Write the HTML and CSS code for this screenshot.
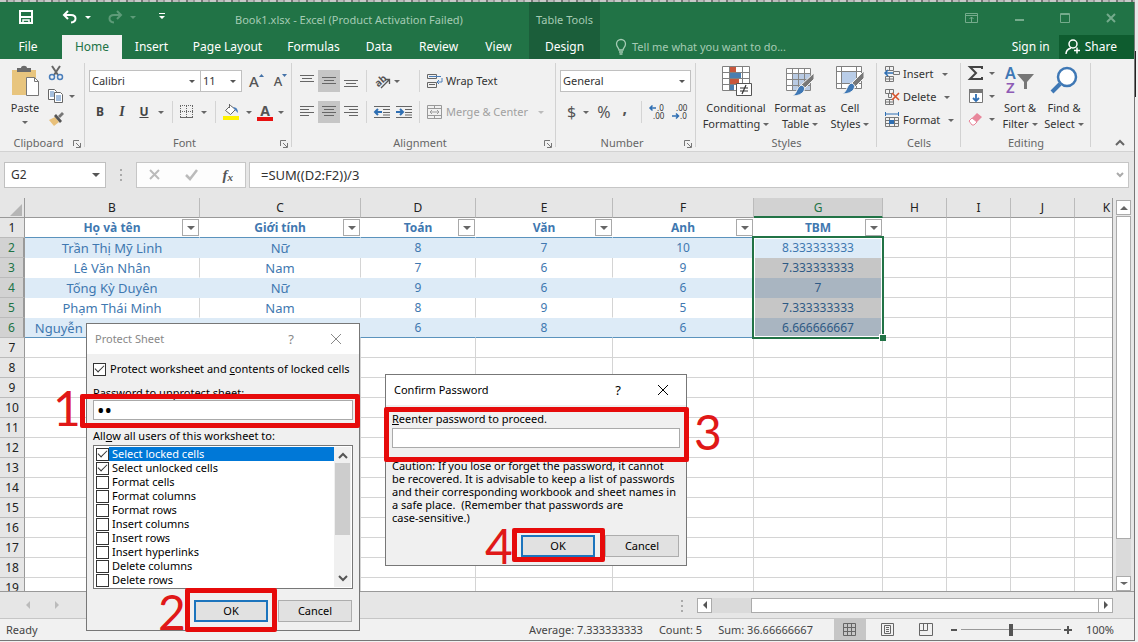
FILE: index.html
```html
<!DOCTYPE html>
<html lang="en">
<head>
<meta charset="utf-8">
<title>Book1.xlsx - Excel</title>
<link rel="stylesheet" href="styles.css">
</head>
<body>
<div class="app">
<header class="titlebar">
  <div class="quick">
    <button class="ib" aria-label="Save"><svg width="16" height="16" viewBox="0 0 16 16" fill="none" stroke="#fff" stroke-width="2"><path d="M2 2h12v12H2zM2 8h12"/><path d="M5 14v-3h6v3" stroke-width="1.5"/></svg></button>
    <button class="ib undo" aria-label="Undo"><svg width="16" height="14" viewBox="0 0 16 14" fill="none" stroke="#fff" stroke-width="2"><path d="M6 1L2 5l4 4M2 5h7c6 0 6 7 0 7.500"/></svg><i class="caret"></i></button>
    <button class="ib redo" aria-label="Redo"><svg width="16" height="14" viewBox="0 0 16 14" fill="none" stroke="#5d9b78" stroke-width="2"><path d="M10 1l4 4-4 4M14 5H7c-6 0-6 7 0 7.500"/></svg><i class="caret"></i></button>
    <button class="ib more" aria-label="Customize"><svg width="8" height="8" viewBox="0 0 8 8"><path d="M1 0h6v1H1zM1 3h6L4 6z" fill="#fff"/></svg></button>
  </div>
  <div class="doc">Book1.xlsx - Excel (Product Activation Failed)</div>
  <div class="tools">Table Tools</div>
  <div class="winbtns">
    <button class="ib" aria-label="Ribbon options"><svg width="14" height="12" viewBox="0 0 14 12" fill="none" stroke="#75ab8c"><path d="M.5 1.500h12v9H.5zM.5 3.500h12M6.500 10V5M4.500 7l2-2 2 2"/></svg></button>
    <button class="ib" aria-label="Minimize"><svg width="12" height="12"><path d="M2 7h9v2H2z" fill="#75ab8c"/></svg></button>
    <button class="ib" aria-label="Maximize"><svg width="12" height="12" fill="none" stroke="#75ab8c"><path d="M1.500 1.500h9v9h-9zM1 2.500h10"/></svg></button>
    <button class="ib" aria-label="Close"><svg width="12" height="12" stroke="#75ab8c" stroke-width="2"><path d="M2 2l8 8M10 2l-8 8"/></svg></button>
  </div>
</header>
<nav class="tabs">
  <button class="file">File</button>
  <button class="on">Home</button>
  <button class="t-ins">Insert</button>
  <button class="t-page">Page Layout</button>
  <button class="t-form">Formulas</button>
  <button class="t-data">Data</button>
  <button class="t-rev">Review</button>
  <button class="t-view">View</button>
  <button class="design">Design</button>
  <button class="tell"><svg width="12" height="16" viewBox="0 0 12 16" fill="none" stroke="#a5cbb4" stroke-width="1.300"><path d="M4 11C4 9 1.500 8 1.500 5a4.300 4.300 0 0 1 9 0c0 3-2.500 4-2.500 6zM4 13h4M4.500 15h3"/></svg>Tell me what you want to do...</button>
  <button class="sign">Sign in</button>
  <button class="share"><svg width="16" height="16" viewBox="0 0 16 16" fill="none" stroke="#fff" stroke-width="1.500"><circle cx="8" cy="5" r="4"/><path d="M1 15c0-3 2-5 5-6M9 11.500h6M12 8.500v6"/></svg>Share</button>
</nav>

<section class="ribbon">
  <div class="group g-clip">
    <div class="body">
      <button class="big paste"><svg width="30" height="32" viewBox="0 0 30 32"><path d="M2 5h24v25H2z" fill="#e8c57e"/><path d="M7 3h4c0-3 6-3 6 0h4v4H7z" fill="#6b6b6b"/><path d="M16.500 12.500h8l4 4v14h-12z" fill="#fff" stroke="#777"/><path d="M24.500 12.500v4h4" fill="none" stroke="#777"/></svg><span>Paste</span><i class="caret"></i></button>
      <div class="stack">
        <button class="ib" aria-label="Cut"><svg width="16" height="16" viewBox="0 0 16 16" fill="none"><path d="M4 1l6 9M12 1L6 10" stroke="#666" stroke-width="2"/><circle cx="4" cy="12" r="2.500" stroke="#4a7ebb" stroke-width="1.500"/><circle cx="12" cy="12" r="2.500" stroke="#4a7ebb" stroke-width="1.500"/></svg></button>
        <button class="ib" aria-label="Copy"><svg width="16" height="16" viewBox="0 0 16 16" fill="#fff" stroke="#666"><path d="M.5 1.500h6l2 2v8h-8z"/><path d="M2 4h4M2 6h4M2 8h4" stroke="#4a7ebb"/><path d="M6.500 4.500h6l2 2v8h-8z"/><path d="M8 8h5M8 10h5M8 12h5" stroke="#4a7ebb"/></svg><i class="caret"></i></button>
        <button class="ib" aria-label="Format Painter"><svg width="16" height="16" viewBox="0 0 16 16"><path d="M1 9l6-3 4 5-5 4z" fill="#e8c07a"/><path d="M6 5l2-2 6 7-2 2z" fill="#555"/><path d="M10 5l4-4 2 2-4 4z" fill="#777"/></svg></button>
      </div>
    </div>
    <div class="glabel"><span>Clipboard</span><svg class="lau" width="8" height="8" viewBox="0 0 8 8" fill="none" stroke="#777"><path d="M.5 6V.5H6M3 3l4 4M7.500 3v4.500H3"/></svg></div>
  </div>

  <div class="group g-font">
    <div class="body rows">
      <div class="row">
        <span class="sel w-face"><select aria-label="Font"><option>Calibri</option></select></span><span class="sel w-size"><select aria-label="Font size"><option>11</option></select></span>
        <button class="ib grow" aria-label="Increase font size"><span>A</span><svg width="5" height="14"><path d="M0 3h5L2.500 0z" fill="#4472a8"/></svg></button>
        <button class="ib shrink" aria-label="Decrease font size"><span>A</span><svg width="5" height="14"><path d="M0 0h5L2.500 3z" fill="#4472a8"/></svg></button>
      </div>
      <div class="row fmt">
        <button class="ib ch"><b>B</b></button><button class="ib ch it"><b>I</b></button><button class="ib ch"><u>U</u></button><i class="caret"></i><i class="sep"></i>
        <button class="ib bord" aria-label="Borders"><svg width="14" height="14" viewBox="0 0 14 14" fill="none" stroke="#666"><path d="M0 .5h13M.5 1v12M6.500 1v12M12.500 1v12M0 6.500h13" stroke-dasharray="1 1"/><path d="M0 12.500h13"/></svg><i class="caret"></i></button><i class="sep"></i>
        <button class="ib fillb" aria-label="Fill color"><svg width="16" height="16" viewBox="0 0 16 16"><path d="M2.500 6.500l5-5 5 4-5 5z" fill="#fff" stroke="#666"/><path d="M6.500 4V0" stroke="#666"/><path d="M10 3q5 0 5 6l-3-3z" fill="#4a7ebb"/><path d="M0 12h16v4H0z" fill="#fff200"/></svg><i class="caret"></i></button>
        <button class="ib" aria-label="Font color"><span class="acol">A</span><i class="caret"></i></button>
      </div>
    </div>
    <div class="glabel"><span>Font</span><svg class="lau" width="8" height="8" viewBox="0 0 8 8" fill="none" stroke="#777"><path d="M.5 6V.5H6M3 3l4 4M7.500 3v4.500H3"/></svg></div>
  </div>

  <div class="group g-align">
    <div class="body rows">
      <div class="row">
        <button class="al" aria-label="Top align"><svg width="14" height="14" stroke="#666"><path d="M0 1.500h14M2 4.500h10M0 7.500h14"/></svg></button>
        <button class="al act" aria-label="Middle align"><svg width="14" height="14" stroke="#666"><path d="M0 3.500h14M2 6.500h10M0 9.500h14"/></svg></button>
        <button class="al" aria-label="Bottom align"><svg width="14" height="14" stroke="#666"><path d="M0 6.500h14M2 9.500h10M0 12.500h14"/></svg></button><i class="sep"></i>
        <button class="ib orient" aria-label="Orientation"><svg width="18" height="18" viewBox="0 0 18 18" fill="none" stroke="#555"><text x="1" y="13" font-size="10" font-weight="700" fill="#555" stroke="none" transform="rotate(-42 6 10)">ab</text><path d="M7 16l8-8M11 7.500h4.500V12" stroke-width="1.300"/></svg><i class="caret"></i></button><i class="sep s2"></i>
        <button class="ib txt"><svg width="16" height="16" viewBox="0 0 16 16" fill="none" stroke="#666"><path d="M.5 1.500h9v4h-9zM.5 9.500h9v5h-9zM2 11.500h6"/><path d="M2 3.500h12M15 5v4h-5M12 7l-2 2 2 2" stroke="#4a7ebb"/></svg>Wrap Text</button>
      </div>
      <div class="row">
        <button class="al" aria-label="Align left"><svg width="14" height="14" stroke="#666"><path d="M0 1.500h14M0 4.500h9M0 7.500h14M0 10.500h9"/></svg></button>
        <button class="al act" aria-label="Center"><svg width="14" height="14" stroke="#666"><path d="M0 1.500h14M2 4.500h10M0 7.500h14M2 10.500h10"/></svg></button>
        <button class="al" aria-label="Align right"><svg width="14" height="14" stroke="#666"><path d="M0 1.500h14M5 4.500h9M0 7.500h14M5 10.500h9"/></svg></button><i class="sep"></i>
        <button class="ib ind" aria-label="Decrease indent"><svg width="16" height="14" viewBox="0 0 16 14" stroke="#666"><path d="M0 1.500h16M9 4.500h7M9 7.500h7M0 12.500h16M9 10h7"/><path d="M1 7h7M4 4L1 7l3 3" stroke="#2f6fb3" stroke-width="2" fill="none"/></svg></button>
        <button class="ib ind" aria-label="Increase indent"><svg width="16" height="14" viewBox="0 0 16 14" stroke="#666"><path d="M0 1.500h16M9 4.500h7M9 7.500h7M0 12.500h16M9 10h7"/><path d="M0 7h6M4 4l3 3-3 3" stroke="#2f6fb3" stroke-width="2" fill="none"/></svg></button><i class="sep s3"></i>
        <button class="ib txt dim"><svg width="16" height="16" viewBox="0 0 16 16" fill="none" stroke="#999"><path d="M.5 1.500h14v13H.5zM.5 4.500h14M.5 11.500h14M7.500 1v3M7.500 12v3M3 8h9M5 6L3 8l2 2M10 6l2 2-2 2"/></svg>Merge &amp; Center<i class="caret"></i></button>
      </div>
    </div>
    <div class="glabel"><span>Alignment</span><svg class="lau" width="8" height="8" viewBox="0 0 8 8" fill="none" stroke="#777"><path d="M.5 6V.5H6M3 3l4 4M7.500 3v4.500H3"/></svg></div>
  </div>

  <div class="group g-num">
    <div class="body rows">
      <div class="row"><span class="sel w-num"><select aria-label="Number format"><option>General</option></select></span></div>
      <div class="row nums">
        <button class="ib sym dol">$<i class="caret"></i></button><button class="ib sym pct">%</button><button class="ib sym com">,</button><i class="sep"></i>
        <button class="ib" aria-label="Increase decimal"><svg width="16" height="18" viewBox="0 0 16 18" font-size="8" fill="#333"><text x="8" y="8">.0</text><text x="4" y="16">.00</text><path d="M1 5h6M3.500 2.500L1 5l2.500 2.500" stroke="#2f6fb3" stroke-width="1.500" fill="none"/></svg></button>
        <button class="ib dec" aria-label="Decrease decimal"><svg width="16" height="18" viewBox="0 0 16 18" font-size="8" fill="#333"><text x="4" y="8">.00</text><text x="8" y="16">.0</text><path d="M0 13h6M4 10.500L6.500 13 4 15.500" stroke="#2f6fb3" stroke-width="1.500" fill="none"/></svg></button>
      </div>
    </div>
    <div class="glabel"><span>Number</span><svg class="lau" width="8" height="8" viewBox="0 0 8 8" fill="none" stroke="#777"><path d="M.5 6V.5H6M3 3l4 4M7.500 3v4.500H3"/></svg></div>
  </div>

  <div class="group g-styles">
    <div class="body">
      <button class="big w-cond"><svg width="32" height="32" viewBox="0 0 32 32"><path d="M2.500 1.500h27v24h-27z" fill="#fff"/><path d="M10 2h6v6h-6zM10 13h9v6h-9z" fill="#c8573c"/><path d="M10 8h11v5H10zM10 19h4v7h-4z" fill="#4a7eb0"/><path d="M2.500 1.500h27v24h-27zM2 7.500h27M2 13.500h27M2 19.500h27M9.500 2v24M22.500 2v24" fill="none" stroke="#808080"/><path d="M16.500 18.500h15v12h-15z" fill="#fff" stroke="#555"/><path d="M20 23h8M20 26h8M26 20l-4 9" stroke="#333" stroke-width="1.200"/></svg><span>Conditional</span><span>Formatting<i class="caret"></i></span></button>
      <button class="big w-fmt"><svg width="32" height="32" viewBox="0 0 32 32"><path d="M2.500 3.500h24v22h-24z" fill="#fff"/><path d="M8 9h18v16H8z" fill="#b9cbe4"/><path d="M2.500 3.500h24v22h-24zM2 8.500h24M2 14.500h24M2 20.500h24M8.500 4v22M14.500 4v22M20.500 4v22" fill="none" stroke="#858585"/><path d="M30 8v6L20 24l-3-4z" fill="#777" stroke="#f1f1f1"/><path d="M17 20q5 1 3 6-3 5-12 5 4-2 5-6 1-3 4-5z" fill="#3f78b5" stroke="#f1f1f1"/></svg><span>Format as</span><span>Table<i class="caret"></i></span></button>
      <button class="big w-cell"><svg width="32" height="32" viewBox="0 0 32 32"><path d="M2.500 1.500h25v22h-25z" fill="#fff"/><path d="M7 7h15v11H7z" fill="#b9cde8"/><path d="M2.500 1.500h25v22h-25zM2 6.500h25M2 18.500h25M7.500 2v21M22.500 2v21" fill="none" stroke="#808080"/><path d="M30 6v7L20 23l-3-4z" fill="#777" stroke="#f1f1f1"/><path d="M17 18q5 1 3 6-3 5-12 5 4-2 5-6 1-3 4-5z" fill="#3f78b5" stroke="#f1f1f1"/></svg><span>Cell</span><span>Styles<i class="caret"></i></span></button>
    </div>
    <div class="glabel"><span>Styles</span></div>
  </div>

  <div class="group g-cells">
    <div class="body stack3">
      <button class="ib txt"><svg width="16" height="16" viewBox="0 0 16 16" fill="none" stroke="#777"><path d="M1.500.5h8v4h-8zM5.500.5v4M1.500 10.500h8v5h-8zM5.500 10v5M1 13h8M9.500 5.500h6v3h-6z"/><path d="M1 7h8M4 4L1 7l3 3" stroke="#2f6fb3" stroke-width="1.500"/></svg>Insert<i class="caret"></i></button>
      <button class="ib txt"><svg width="16" height="16" viewBox="0 0 16 16" fill="none" stroke="#777"><path d="M1.500.5h8v4h-8zM5.500.5v4M1.500 10.500h8v5h-8zM5.500 10v5M1 13h8M4.500 4.500h3v4h-3z"/><path d="M8 4l7 7M15 4l-7 7" stroke="#d8532b" stroke-width="1.600"/></svg>Delete<i class="caret"></i></button>
      <button class="ib txt"><svg width="16" height="16" viewBox="0 0 16 16" fill="none" stroke="#777"><path d="M1.500 5.500h13v9h-13zM1 8.500h14M1 11.500h14M5.500 5v10M10.500 5v10"/><path d="M5 8h5v4H5z" fill="#2f6fb3" stroke="none"/><path d="M1 2h13M1.500 0v4M14.500 0v4" stroke="#2f6fb3"/></svg>Format<i class="caret"></i></button>
    </div>
    <div class="glabel"><span>Cells</span></div>
  </div>

  <div class="group g-edit">
    <div class="body">
      <div class="stack ed">
        <button class="ib" aria-label="AutoSum"><svg width="16" height="16" viewBox="0 0 16 16" fill="none" stroke="#444" stroke-width="2"><path d="M14 4V2H2l6 6-6 6h12v-2"/></svg><i class="caret"></i></button>
        <button class="ib" aria-label="Fill"><svg width="16" height="16" viewBox="0 0 16 16"><path d="M1.500 1.500h13v13h-13z" fill="#fff" stroke="#777"/><path d="M1 1h14v4H1z" fill="#777"/><path d="M8 6v7M5 10l3 3 3-3" stroke="#2f6fb3" stroke-width="1.800" fill="none"/></svg><i class="caret"></i></button>
        <button class="ib" aria-label="Clear"><svg width="16" height="16" viewBox="0 0 16 16"><path d="M1 10l8-8 5 4-8 8z" fill="#e8879b"/><path d="M1 10l3-3 5 4-3 3H4z" fill="#fff" stroke="#e8879b"/></svg><i class="caret"></i></button>
      </div>
      <button class="big w-sort"><svg width="32" height="32" viewBox="0 0 32 32"><text x="1" y="14" font-size="16" font-weight="600" fill="#3f78b5">A</text><text x="2" y="28" font-size="15" font-weight="600" fill="#8e5bb5">Z</text><path d="M13 9h17l-7 8v7h-3v-7z" fill="#777"/></svg><span>Sort &amp;</span><span>Filter<i class="caret"></i></span></button>
      <button class="big w-find"><svg width="32" height="32" viewBox="0 0 32 32"><circle cx="19" cy="12" r="9" fill="#fff" stroke="#3f78b5" stroke-width="2.500"/><path d="M12 19l-8 8" stroke="#3f78b5" stroke-width="4"/></svg><span>Find &amp;</span><span>Select<i class="caret"></i></span></button>
    </div>
    <div class="glabel"><span>Editing</span></div>
  </div>
  <button class="ib collapse" aria-label="Collapse ribbon"><svg width="10" height="8" fill="none" stroke="#666" stroke-width="2"><path d="M1 6l4-4 4 4"/></svg></button>
</section>

<section class="fbar">
  <span class="sel namebox"><select aria-label="Name box"><option>G2</option></select></span>
  <i class="dots"></i>
  <div class="fx">
    <button class="ib" aria-label="Cancel"><svg width="12" height="12" stroke="#bbb" stroke-width="2"><path d="M1 1l9 9M10 1l-9 9"/></svg></button>
    <button class="ib" aria-label="Enter"><svg width="14" height="12" stroke="#bbb" stroke-width="2.500" fill="none"><path d="M1 6l4 4 7-9"/></svg></button>
    <button class="ib fxt"><i>f</i><small>x</small></button>
  </div>
  <div class="formula"><input aria-label="Formula" value="=SUM((D2:F2))/3"><svg width="8" height="8" fill="none" stroke="#aaa" stroke-width="2"><path d="M1 2l3 3 3-3"/></svg></div>
</section>

<main class="work">
  <div class="gridwrap">
  <table class="grid">
    <colgroup><col class="c0"><col class="cb"><col class="cc"><col class="cd"><col class="ce"><col class="cf"><col class="cg"><col class="cs"><col class="cs"><col class="cs"><col class="cs"></colgroup>
    <tr class="cols"><th><svg width="12" height="12"><path d="M12 0v12H0z" fill="#b5b5b5"/></svg></th><th>B</th><th>C</th><th>D</th><th>E</th><th>F</th><th class="hot">G</th><th>H</th><th>I</th><th>J</th><th>K</th></tr>
    <tr class="head"><th>1</th>
      <td><div class="fh"><b>Họ và tên</b><button aria-label="Filter"><i class="caret"></i></button></div></td>
      <td><div class="fh"><b>Giới tính</b><button aria-label="Filter"><i class="caret"></i></button></div></td>
      <td><div class="fh"><b>Toán</b><button aria-label="Filter"><i class="caret"></i></button></div></td>
      <td><div class="fh"><b>Văn</b><button aria-label="Filter"><i class="caret"></i></button></div></td>
      <td><div class="fh"><b>Anh</b><button aria-label="Filter"><i class="caret"></i></button></div></td>
      <td><div class="fh"><b>TBM</b><button aria-label="Filter"><i class="caret"></i></button></div></td>
      <td></td><td></td><td></td><td></td></tr>
    <tr class="d band"><th>2</th><td class="nm">Trần Thị Mỹ Linh</td><td class="nm">Nữ</td><td>8</td><td>7</td><td>10</td><td class="g first">8.333333333<i class="range"></i></td><td></td><td></td><td></td><td></td></tr>
    <tr class="d"><th>3</th><td class="nm">Lê Văn Nhân</td><td class="nm">Nam</td><td>7</td><td>6</td><td>9</td><td class="g">7.333333333</td><td></td><td></td><td></td><td></td></tr>
    <tr class="d band"><th>4</th><td class="nm">Tống Kỳ Duyên</td><td class="nm">Nữ</td><td>9</td><td>6</td><td>6</td><td class="g">7</td><td></td><td></td><td></td><td></td></tr>
    <tr class="d"><th>5</th><td class="nm">Phạm Thái Minh</td><td class="nm">Nam</td><td>8</td><td>9</td><td>5</td><td class="g">7.333333333</td><td></td><td></td><td></td><td></td></tr>
    <tr class="d band last"><th>6</th><td class="nm">Nguyễn Hoàng Minh Anh</td><td class="nm">Nữ</td><td>6</td><td>8</td><td>6</td><td class="g">6.666666667</td><td></td><td></td><td></td><td></td></tr>
    <tr><th>7</th><td><td><td><td><td><td><td><td><td><td></tr>
    <tr><th>8</th><td><td><td><td><td><td><td><td><td><td></tr>
    <tr><th>9</th><td><td><td><td><td><td><td><td><td><td></tr>
    <tr><th>10</th><td><td><td><td><td><td><td><td><td><td></tr>
    <tr><th>11</th><td><td><td><td><td><td><td><td><td><td></tr>
    <tr><th>12</th><td><td><td><td><td><td><td><td><td><td></tr>
    <tr><th>13</th><td><td><td><td><td><td><td><td><td><td></tr>
    <tr><th>14</th><td><td><td><td><td><td><td><td><td><td></tr>
    <tr><th>15</th><td><td><td><td><td><td><td><td><td><td></tr>
    <tr><th>16</th><td><td><td><td><td><td><td><td><td><td></tr>
    <tr><th>17</th><td><td><td><td><td><td><td><td><td><td></tr>
    <tr><th>18</th><td><td><td><td><td><td><td><td><td><td></tr>
    <tr><th>19</th><td><td><td><td><td><td><td><td><td><td></tr>
  </table>
  </div>
  <div class="vscroll">
    <button aria-label="Scroll up"><i class="caret up"></i></button>
    <div class="vthumb"></div><div class="vtrack"></div>
    <button aria-label="Scroll down"><i class="caret"></i></button>
  </div>
</main>

<div class="sheetbar">
  <div class="nav"><svg width="6" height="8"><path d="M5 0v8L1 4z" fill="#bbb"/></svg><svg width="6" height="8"><path d="M1 0v8l4-4z" fill="#bbb"/></svg></div>
  <i class="dots"></i>
  <div class="hscroll"><button aria-label="Scroll left"><svg width="6" height="8"><path d="M5 0v8L1 4z" fill="#555"/></svg></button><div class="htrack"></div><div class="hthumb"></div><button aria-label="Scroll right"><svg width="6" height="8"><path d="M1 0v8l4-4z" fill="#555"/></svg></button></div>
</div>
<footer class="status">
  <span class="ready">Ready</span>
  <span>Average: 7.333333333</span><span>Count: 5</span><span>Sum: 36.66666667</span>
  <div class="views">
    <button class="on" aria-label="Normal"><svg width="14" height="14" fill="none" stroke="#666"><path d="M.5.5h12v12H.5zM.5 4.500h12M.5 8.500h12M4.500 1v12M8.500 1v12"/></svg></button>
    <button aria-label="Page layout"><svg width="14" height="14" fill="none" stroke="#666"><path d="M.5.5h12v12H.5zM3.500 2.500h6v8h-6zM5 4.500h3M5 6.500h3M5 8.500h3"/></svg></button>
    <button aria-label="Page break"><svg width="14" height="14" fill="none" stroke="#666"><path d="M.5.5h13v12H.5zM.5 7.500h8v-7M4.500.5v7"/></svg></button>
  </div>
  <div class="zoom"><button class="ib" aria-label="Zoom out"><svg width="8" height="8"><path d="M1 3h6v2H1z" fill="#555"/></svg></button><input type="range" aria-label="Zoom" value="50"><button class="ib" aria-label="Zoom in"><svg width="8" height="8"><path d="M0 3h8v2H0zM3 0h2v8H3z" fill="#555"/></svg></button></div>
  <span class="pc">100%</span>
</footer>
</div>

<section class="dialog protect" role="dialog" aria-label="Protect Sheet">
  <div class="dt"><span>Protect Sheet</span><button class="ib q">?</button><button class="ib" aria-label="Close"><svg width="12" height="12" stroke="#888"><path d="M1 1l10 10M11 1L1 11"/></svg></button></div>
  <div class="db">
    <label class="ck main"><input type="checkbox" checked>Protect worksheet and&nbsp;<u>c</u>ontents of locked cells</label>
    <label class="pl" for="pw"><u>P</u>assword to unprotect sheet:</label>
    <input class="field" id="pw" type="password" value="ab">
    <div class="al2">All<u>o</u>w all users of this worksheet to:</div>
    <div class="list">
      <div class="items">
        <label class="ck sel1"><input type="checkbox" checked><span>Select locked cells</span></label>
        <label class="ck"><input type="checkbox" checked><span>Select unlocked cells</span></label>
        <label class="ck"><input type="checkbox"><span>Format cells</span></label>
        <label class="ck"><input type="checkbox"><span>Format columns</span></label>
        <label class="ck"><input type="checkbox"><span>Format rows</span></label>
        <label class="ck"><input type="checkbox"><span>Insert columns</span></label>
        <label class="ck"><input type="checkbox"><span>Insert rows</span></label>
        <label class="ck"><input type="checkbox"><span>Insert hyperlinks</span></label>
        <label class="ck"><input type="checkbox"><span>Delete columns</span></label>
        <label class="ck"><input type="checkbox"><span>Delete rows</span></label>
      </div>
      <div class="lscroll"><svg width="10" height="8" fill="none" stroke="#555" stroke-width="2"><path d="M1 6l4-4 4 4"/></svg><div class="lthumb"></div><svg width="10" height="8" fill="none" stroke="#555" stroke-width="2"><path d="M1 2l4 4 4-4"/></svg></div>
    </div>
    <div class="btns"><button class="def">OK</button><button>Cancel</button></div>
  </div>
</section>

<section class="dialog confirm" role="dialog" aria-label="Confirm Password">
  <div class="dt"><span>Confirm Password</span><button class="ib q">?</button><button class="ib" aria-label="Close"><svg width="12" height="12" stroke="#000"><path d="M1 1l10 10M11 1L1 11"/></svg></button></div>
  <div class="db">
    <label class="rl" for="pw2"><u>R</u>eenter password to proceed.</label>
    <input class="field" id="pw2" type="password">
    <p>Caution: If you lose or forget the password, it cannot<br>be recovered. It is advisable to keep a list of passwords<br>and their corresponding workbook and sheet names in<br>a safe place.&nbsp; (Remember that passwords are<br>case-sensitive.)</p>
    <div class="btns"><button class="def">OK</button><button>Cancel</button></div>
  </div>
</section>

<div class="mark m1"></div><div class="num n1">1</div>
<div class="mark m2"></div><div class="num n2">2</div>
<div class="mark m3"></div><div class="num n3">3</div>
<div class="mark m4"></div><div class="num n4">4</div>
</body>
</html>
```
FILE: styles.css
```css
* { box-sizing: border-box; }
body {
  margin: 0; height: 100vh; overflow: hidden; position: relative;
  font: 12px/16px "Noto Sans", sans-serif; color: #333;
  padding: 2px 3px 1px 0;
  background:
    linear-gradient(#e8e8e8, #e8e8e8) right top / 3px 50px no-repeat,
    linear-gradient(#222, #222) right 2px top 51px / 1px 46px no-repeat,
    repeating-linear-gradient(90deg, #c8c8c8 0 6px, #777 6px 8px, #bbb 8px 13px, #999 13px 15px) left top / 100% 2px no-repeat,
    #f1f1f1;
}
button, input, select { font: inherit; color: inherit; margin: 0; padding: 0; border: 0; background: none; border-radius: 0; outline: 0; }
svg { display: block; flex: none; overflow: visible; }
svg text { font-family: "Noto Sans", sans-serif; }
.app { height: 100%; display: flex; flex-direction: column; border-right: 1px solid #777; border-bottom: 1px solid #777; }
.ib { display: flex; align-items: center; justify-content: center; white-space: nowrap; }
.caret { width: 0; height: 0; border: 3px solid transparent; border-top-color: #666; border-bottom: 0; flex: none; display: inline-block; }
.caret.up { border-top: 0; border-bottom: 4px solid #666; }

.titlebar { display: flex; height: 33px; background: #217346; flex: none; color: #a5cbb4; }
.quick { display: flex; width: 235px; padding: 7px 0 10px 18px; align-items: center; }
.quick .caret { border-top-color: #fff; margin-left: 7px; }
.undo { margin-left: 28px; }
.redo { margin-left: 16px; }
.quick .redo .caret { border-top-color: #5d9b78; }
.more { margin-left: 22px; }
.doc { width: 294px; padding-top: 10px; font-size: 11px; white-space: nowrap; }
.tools { width: 71px; background: #1b5e3a; text-align: center; padding-top: 10px; font-size: 11px; white-space: nowrap; }
.winbtns { margin-left: auto; display: flex; gap: 34px; padding: 0 17px 2px 0; align-items: center; }

.tabs { display: flex; height: 24px; background: #217346; color: #fff; flex: none; font-size: 12px; }
.tabs button { white-space: nowrap; text-align: center; }
.file { width: 56px; margin-right: 6px; }
.tabs .on { background: #f1f1f1; color: #217346; width: 60px; }
.t-ins { width: 59px; }
.t-page { width: 93px; }
.t-form { width: 79px; }
.t-data { width: 52px; }
.t-rev { width: 67px; }
.t-view { width: 53px; margin-right: 4px; }
.design { width: 71px; }
.tabs .design { background: #1b5e3a; }
.tabs .tell { display: flex; align-items: center; gap: 5px; padding-left: 15px; color: #a5cbb4; font-size: 11px; }
.sign { margin-left: auto; margin-right: 9px; }
.tabs .share { display: flex; align-items: center; gap: 4px; background: #0e5c2f; padding: 0 17px 0 6px; }

.ribbon { display: flex; background: #f1f1f1; height: 93px; border-bottom: 1px solid #d2d2d2; flex: none; }
.group { display: flex; flex-direction: column; padding: 4px 0 0; flex: none; background: linear-gradient(#d2d2d2, #d2d2d2) right 4px / 1px 84px no-repeat; }
.body { display: flex; flex: none; height: 72px; }
.glabel { display: flex; flex: none; align-items: center; color: #666; font-size: 11px; padding: 0 4px; height: 16px; }
.glabel span { flex: 1; text-align: center; }
.lau { margin: 2px 0 0; }
.g-clip { width: 85px; }
.g-font { width: 207px; }
.g-align { width: 264px; }
.g-num { width: 140px; }
.g-styles { width: 181px; }
.g-cells { width: 84px; }
.g-edit { width: 130px; }
.big { display: flex; flex-direction: column; align-items: center; white-space: nowrap; }
.big svg { margin: 2px 0 3px; }
.big span { display: flex; align-items: center; gap: 3px; line-height: 16px; font-size: 11px; }
.paste { width: 48px; padding-left: 2px; }
.paste .caret { margin-top: 5px; }
.stack { display: flex; flex-direction: column; gap: 7px; padding-top: 2px; align-items: flex-start; }
.stack .ib { gap: 5px; }
.rows { flex-direction: column; gap: 9px; padding: 7px 0 0 4px; }
.row { display: flex; height: 22px; align-items: center; }
.sel { position: relative; display: flex; height: 22px; background: #fff; border: 1px solid #c0c0c0; }
.sel::after { content: ""; position: absolute; right: 5px; top: 9px; border: 3px solid transparent; border-top-color: #555; border-bottom: 0; pointer-events: none; }
.sel select { appearance: none; width: 100%; padding-left: 2px; font-size: 11px; }
.w-face { width: 112px; margin-right: -1px; }
.w-size { width: 42px; }
.w-num { width: 131px; }
.sep { width: 1px; height: 22px; background: #d4d4d4; }
.grow { margin-left: 7px; font-size: 15px; font-weight: 500; color: #555; }
.shrink { margin-left: 10px; font-size: 13px; font-weight: 500; color: #555; }
.ch { width: 22px; color: #444; }
.fmt > .caret { margin: 0 8px 0 3px; }
.it { font-style: italic; font-family: "Liberation Serif", serif; font-size: 14px; }
.ch u { font-weight: 700; }
.bord { margin: 0 8px 0 7px; }
.bord .caret, .fillb .caret { margin-left: 7px; }
.fillb { margin: 0 5px 0 7px; }
.acol { width: 16px; border-bottom: 4px solid #e81010; font-weight: 700; font-size: 14px; line-height: 13px; color: #555; }
.acol + .caret { margin-left: 5px; }
.al { width: 22px; height: 22px; display: flex; align-items: center; justify-content: center; }
.al.act { background: #c6c6c6; }
.g-align .sep { margin: 0 7px 0 4px; }
.orient { gap: 2px; }
.g-align .sep.s2 { margin: 0 7px 0 19px; }
.ind { margin-right: 6px; }
.g-align .sep.s3 { margin: 0 7px 0 1px; }
.txt { gap: 3px; font-size: 11px; }
.dim { color: #a0a0a0; }
.dim .caret { margin-left: 7px; border-top-color: #bbb; }
.sym { font-size: 16px; color: #555; }
.dol { padding-left: 7px; gap: 7px; }
.pct { margin-left: 8px; }
.com { margin: 0 14px 8px 12px; font-weight: 700; }
.nums .sep { margin-right: 7px; }
.dec { margin-left: 7px; }
.g-styles .body { padding-left: 6px; }
.w-cond { width: 68px; }
.w-fmt { width: 60px; }
.w-cell { width: 40px; }
.stack3 { flex-direction: column; gap: 7px; padding: 3px 0 0 7px; align-items: flex-start; }
.stack3 .caret { margin-left: 5px; }
.ed { padding: 2px 0 0 7px; }
.w-sort { width: 46px; margin-left: 2px; }
.w-find { width: 42px; }
.collapse { margin: auto 9px 4px auto; }

.fbar { display: flex; height: 46px; background: #e6e6e6; padding: 10px 5px 10px 4px; flex: none; align-items: stretch; }
.fbar .sel, .fx, .formula { height: 26px; }
.namebox { width: 102px; }
.fbar .sel::after { top: 10px; border-width: 4px 4px 0; }
.fbar .sel select { padding-left: 6px; font-size: 12px; }
.dots { width: 2px; height: 12px; margin: 7px 14px; background: repeating-linear-gradient(#aaa 0 2px, transparent 2px 5px); }
.fx { width: 110px; border: 1px solid #c6c6c6; background: #fdfdfd; display: flex; justify-content: space-around; align-items: center; }
.fxt { font: italic 700 15px "Liberation Serif", serif; color: #555; }
.fxt small { font-size: 11px; padding-top: 4px; }
.formula { flex: 1; margin-left: 3px; border: 1px solid #c6c6c6; background: #fff; display: flex; align-items: center; padding: 0 4px 0 11px; }
.formula input { flex: 1; font-size: 13px; }

.work { flex: 1; min-height: 0; display: flex; background: #e6e6e6; border-bottom: 1px solid #999; }
.gridwrap { flex: 1; min-width: 0; overflow: hidden; border-right: 1px solid #999; background: #fff; }
.grid { border-collapse: separate; border-spacing: 0; table-layout: fixed; width: 1139px; font-size: 12px; line-height: 18px; }
.c0 { width: 25px; }
.cb { width: 175px; }
.cc { width: 161px; }
.cd { width: 115px; }
.ce { width: 137px; }
.cf { width: 141px; }
.cg { width: 129px; }
.cs { width: 64px; }
.grid th, .grid td { height: 20px; padding: 1px 0 0; border: 0 solid #d4d4d4; border-width: 0 1px 1px 0; text-align: center; white-space: nowrap; }
.grid .head td, .grid .cols th { padding: 0; }
.grid th { background: #e6e6e6; font-weight: 400; color: #222; border-color: #bbb; }
.grid tr > th:first-child { border-right-color: #999; }
.grid .cols th { border-bottom-color: #999; }
.cols svg { margin: 4px 0 0 10px; }
.grid .cols .hot { background: #d2d2d2; color: #217346; border-bottom: 2px solid #217346; line-height: 17px; }
.grid .head td, .d td { color: #3f78b0; }
.head td:nth-child(-n+7) { border-right-color: #fff; border-bottom-color: #5b93bd; }
.fh { display: grid; grid-template-columns: 17px 1fr 17px; height: 19px; align-items: center; }
.fh b { grid-column: 2; }
.fh button { height: 17px; background: #fff; border: 1px solid #a9a9a9; display: flex; align-items: center; justify-content: center; }
.fh .caret { border-width: 4px 4px 0; }
.d th:first-child { background: #d2d2d2; color: #217346; border-right: 2px solid #217346; }
.d td.nm { font-size: 13px; }
.d td:nth-child(-n+7) { border-bottom-color: #fff; }
.band td:nth-child(-n+7) { background: #ddebf7; border-color: #ddebf7; }
.d.last td:nth-child(-n+7) { border-bottom-color: #5b93bd; }
.grid .d td.g { background: #c6c6c6; border-color: #c6c6c6; color: #2f5a85; }
.grid .band td.g { background: #a9b5c1; border-color: #a9b5c1; }
.grid .band td.first { background: #ddebf7; border-color: #ddebf7; color: #3f78b0; position: relative; }
.range { position: absolute; left: -2px; top: -2px; right: -2px; height: 103px; border: 2px solid #217346; box-shadow: inset 0 0 0 1px #fff; }
.range::after { content: ""; position: absolute; right: -4px; bottom: -4px; width: 6px; height: 6px; background: #217346; border: 1px solid #fff; border-width: 1px 0 0 1px; }
.vscroll { width: 21px; display: flex; flex-direction: column; padding: 2px 3px 0; }
.vscroll button, .hscroll button { width: 15px; height: 15px; flex: none; background: #fff; border: 1px solid #ababab; display: flex; align-items: center; justify-content: center; }
.vscroll .caret { border-left-width: 4px; border-right-width: 4px; }
.vthumb { flex: 325; background: #fff; border: 1px solid #ababab; margin-top: 1px; }
.vtrack { flex: 38; background: #dadada; }

.sheetbar { height: 27px; flex: none; background: #e6e6e6; display: flex; align-items: center; border-bottom: 1px solid #c6c6c6; }
.nav { flex: 1; display: flex; gap: 23px; padding-left: 25px; }
.hscroll { width: 416px; margin-right: 21px; display: flex; height: 15px; }
.sheetbar .dots { margin-top: 8px; }
.htrack { width: 39px; background: #dadada; }
.hthumb { flex: 1; background: #fff; border: 1px solid #ababab; margin-right: -1px; }
.status { height: 21px; flex: none; background: #f1f1f1; display: flex; align-items: center; font-size: 11px; color: #444; padding: 0 20px 0 6px; gap: 16px; white-space: nowrap; }
.ready { margin-right: auto; }
.views { display: flex; align-self: stretch; margin-left: 5px; }
.views button { width: 32px; display: flex; align-items: center; justify-content: center; margin-right: 6px; }
.views button.on { background: #c6c6c6; }
.views button:last-child { margin-right: 0; }
.zoom { display: flex; gap: 3px; align-items: center; margin: 0 -2px 0 -8px; }
.zoom input { appearance: none; width: 100px; height: 12px; background: linear-gradient(#999, #999) center / 100% 1px no-repeat; }
.zoom input::-webkit-slider-thumb { appearance: none; width: 4px; height: 12px; background: #555; }

.dialog { position: absolute; background: #f0f0f0; border: 1px solid #777; color: #000; font-size: 11px; line-height: 14px; }
.protect { left: 86px; top: 323px; width: 274px; height: 308px; }
.confirm { left: 385px; top: 374px; width: 302px; height: 192px; }
.dt { display: flex; align-items: center; height: 30px; background: #fff; padding: 0 17px 0 8px; }
.dt span { flex: 1; }
.q { margin-right: 36px; font-size: 13px; }
.protect .dt { color: #888; }
.db { padding: 0 6px; display: flex; flex-direction: column; }
.ck { display: flex; align-items: center; height: 14px; white-space: nowrap; }
.ck input { appearance: none; width: 13px; height: 13px; flex: none; border: 1px solid #333; background: #fff; display: flex; align-items: center; justify-content: center; }
.ck input:checked::before { content: ""; width: 8px; height: 4px; border: solid #333; border-width: 0 0 1px 1px; transform: rotate(-45deg); margin-bottom: 3px; }
.main { margin-top: 8px; }
.main input { margin-right: 4px; }
.pl { margin-top: 10px; }
.field { height: 20px; border: 1px solid #aaa; background: #fff; padding: 0 3px; font-size: 20px; }
.al2 { margin: 9px 0 2px; }
.list { display: flex; border: 1px solid #777; background: #fff; height: 144px; padding: 1px; }
.items { flex: 1; padding-left: 1px; }
.ck span { padding-left: 3px; flex: 1; }
.sel1 span { background: #0078d7; color: #fff; }
.lscroll { width: 17px; background: #f0f0f0; display: flex; flex-direction: column; align-items: center; padding: 5px 0; justify-content: space-between; }
.lthumb { width: 15px; height: 72px; background: #cdcdcd; margin: 3px 0 auto; }
.btns { display: flex; justify-content: flex-end; gap: 10px; margin-top: 11px; padding-right: 1px; }
.btns button { width: 74px; height: 22px; background: #e1e1e1; border: 1px solid #adadad; }
.btns .def { border: 2px solid #1c74bd; }
.rl { margin-top: 7px; }
.confirm .field { margin-top: 2px; }
.confirm p { margin: 11px 0 0; line-height: 13px; white-space: nowrap; }
.confirm .btns { margin-top: 11px; }

.mark { position: absolute; border: 5px solid #e60b0b; border-radius: 2px; }
.m1 { left: 80px; top: 394px; width: 280px; height: 34px; }
.m2 { left: 185px; top: 588px; width: 92px; height: 44px; }
.m3 { left: 384px; top: 407px; width: 305px; height: 55px; }
.m4 { left: 512px; top: 528px; width: 93px; height: 34px; }
.num { position: absolute; color: #e01818; font: 48px/48px Lato, sans-serif; }
.n1 { left: 53px; top: 384px; }
.n2 { left: 158px; top: 588px; }
.n3 { left: 694px; top: 408px; }
.n4 { left: 485px; top: 522px; }
```
